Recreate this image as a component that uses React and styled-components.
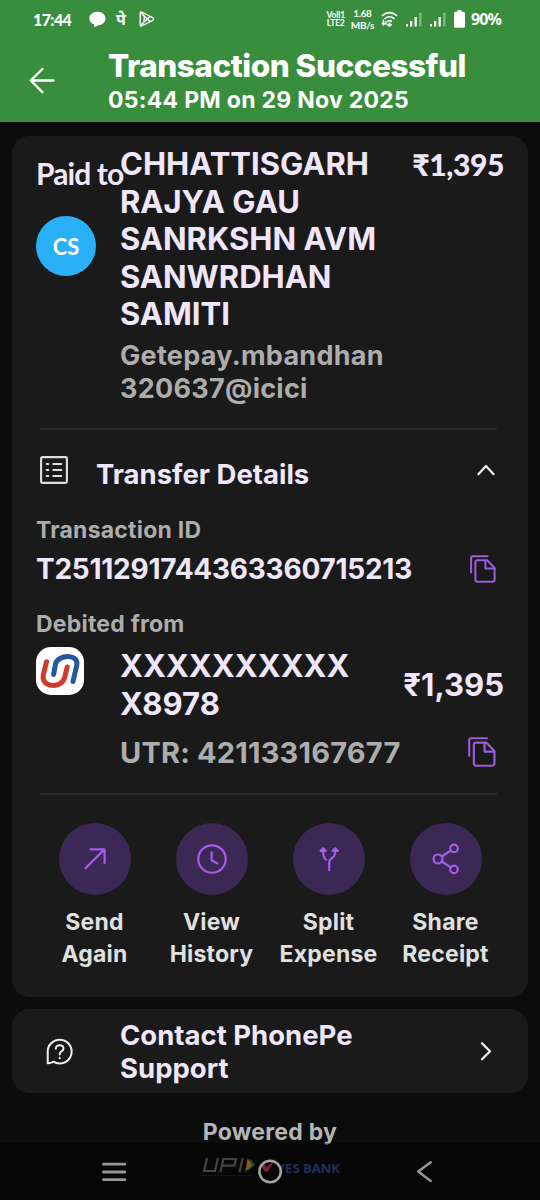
import React from 'react';
import styled, { createGlobalStyle } from 'styled-components';

const actions = [
  { name: 'send', text: ['Send', 'Again'] },
  { name: 'history', text: ['View', 'History'] },
  { name: 'split', text: ['Split', 'Expense'] },
  { name: 'share', text: ['Share', 'Receipt'] },
];

const ActionIcon = ({ name }) => (
  <Icon width="36" height="36" viewBox="0 0 36 36" $width={2.2}>
    {name === 'send' && <path d="M8.5 27.3 27.4 8.4M13.5 8.4H27.6V22" />}
    {name === 'history' && (
      <>
        <circle cx="18" cy="18" r="13.7" />
        <path d="M17.6 11.3V18.3Q17.7 19.4 18.6 20L23.6 22.6" />
      </>
    )}
    {name === 'split' && (
      <>
        <path d="M18.2 29.2V21.5Q18.2 19.2 20.4 17.7 24.2 15 24.2 11V8.5M12.2 8.5V11.5Q12.2 16.5 15.2 18.7" />
        <path d="M9.6 9.8 12.2 7.2 14.8 9.8ZM21.6 9.8 24.2 7.2 26.8 9.8Z" />
      </>
    )}
    {name === 'share' && (
      <>
        <circle cx="10" cy="18" r="4.5" />
        <circle cx="26" cy="7.4" r="3.8" />
        <circle cx="26" cy="28.4" r="3.8" />
        <path d="M13.8 15.5 22.8 9.5M13.8 20.5 22.8 26.3" />
      </>
    )}
  </Icon>
);

const CopyIcon = ({ width = 26, height = 28 }) => (
  <Icon width={width} height={height} viewBox="0.4 0 26 28" $color="#9c5cdc" $width={2}>
    <path d="M1.5 17.5V3Q1.5 1.2 3.3 1.2H18" />
    <path d="M8 5.3H17.5L25 13V24.6Q25 26.8 22.8 26.8H8Q5.8 26.8 5.8 24.6V7.5Q5.8 5.3 8 5.3Z" />
    <path d="M15.8 5.5V13.6H24.8" />
  </Icon>
);

const SignalIcon = () => (
  <svg width="16" height="15" viewBox="0 0 16 15" fill="#fff">
    <path d="M0 12h2v2.5H0zM4 9h2.3v5.5H4zM8.5 5h2.3v9.5H8.5z" />
    <path d="M13.2 1h2.3v13.5h-2.3z" opacity="0.4" />
  </svg>
);

const App = () => {
  return (
    <>
      <GlobalStyle />
      <Screen>
        <Header>
          <StatusBar>
            <Clock>17:44</Clock>
            <svg width="17" height="17" viewBox="0 0 17 17" fill="#fff">
              <path d="M8.5.8C13 .8 16.5 3.6 16.5 7.5S13 14.2 9.5 14.2Q7 16 4.8 16 5.6 14.7 5 13.5C2.2 12.6.4 10.4.4 7.5.4 3.6 4 .8 8.5.8Z" />
            </svg>
            <PeMark>पे</PeMark>
            <Icon width="16" height="16" viewBox="0 0 16 16" $color="#fff" $width={1.4}>
              <path d="M2.6 1Q1.2.5 1.2 2.2V13.8Q1.2 15.5 2.6 15L13.7 9.3Q15.6 8 13.7 6.7ZM1.8 1.7 11 10.5M1.8 14.3 11 5.5M5.2 5 5.2 11" />
            </Icon>
            <StatusRight>
              <Stack>
                <span>Voll1</span>
                <span>LTE2</span>
              </Stack>
              <Stack $large>
                <span>1.68</span>
                <span>MB/s</span>
              </Stack>
              <WifiIcon width="17" height="16" viewBox="0 0 18 16">
                <path d="M1 4.6Q9-2 17 4.6M3.6 7.8Q9 3.5 14.4 7.8M6.5 10.8Q9 8.8 11.5 10.8" />
                <path d="M9 12.6l1.6 1.6L9 15.6l-1.6-1.4ZM2.6 8.6v5M1 12.2l1.6 1.8 1.4-1.8M5.3 14V10.5" />
              </WifiIcon>
              <SignalIcon />
              <SignalIcon />
              <svg width="11" height="18" viewBox="0 0 11 18" fill="#fff">
                <path d="M3.4 0H7.6V1.8H9.4Q11 1.8 11 3.4V16.2Q11 17.8 9.4 17.8H1.6Q0 17.8 0 16.2V3.4Q0 1.8 1.6 1.8H3.4Z" />
              </svg>
              <Percent>90%</Percent>
            </StatusRight>
          </StatusBar>
          <TitleRow>
            <Icon width="26" height="28" viewBox="0 0 26 28" $color="#fff" $width={2.4}>
              <path d="M24.4 13.5H1.8M13.4 2 1.8 13.5 13.4 25.2" />
            </Icon>
            <div>
              <Title>Transaction Successful</Title>
              <DateText>05:44 PM on 29 Nov 2025</DateText>
            </div>
          </TitleRow>
        </Header>

        <DetailsCard>
          <PayeeRow>
            <PayeeSide>
              <PaidTo>Paid to</PaidTo>
              <Avatar>
                <span>CS</span>
              </Avatar>
            </PayeeSide>
            <div>
              <PayeeName>
                CHHATTISGARH
                <br />
                RAJYA GAU
                <br />
                SANRKSHN AVM
                <br />
                SANWRDHAN
                <br />
                SAMITI
              </PayeeName>
              <PayeeId>
                Getepay.mbandhan
                <br />
                320637@icici
              </PayeeId>
            </div>
            <PaidAmount>₹1,395</PaidAmount>
          </PayeeRow>
          <Divider />

          <SectionHead>
            <Icon width="28" height="28" viewBox="0 0 28 28" $color="#dedede" $width={2.1}>
              <rect x="1.1" y="1.1" width="25.8" height="25.8" rx="1.4" />
              <path d="M6.7 8h1.6M6.7 14h1.6M6.7 20h1.6M13.3 8h8M13.3 14h8M13.3 20h8" />
            </Icon>
            <SectionTitle>Transfer Details</SectionTitle>
            <Icon width="20" height="12" viewBox="0 0 20 12" $color="#eee" $width={2.2}>
              <path d="M2.4 10.2 10 2 17.6 10.2" />
            </Icon>
          </SectionHead>

          <FieldLabel $top={5}>Transaction ID</FieldLabel>
          <CopyRow $top={6}>
            <TransactionId>T2511291744363360715213</TransactionId>
            <CopyIcon />
          </CopyRow>

          <FieldLabel $top={22}>Debited from</FieldLabel>
          <DebitRow>
            <BankLogo>
              <svg width="48" height="48" viewBox="0 0 48 48" fill="none" strokeLinecap="round" strokeWidth="5">
                <path d="M17.6 27.5 19.5 17C21.5 7.5 43 6 40.8 18L37 34.5" stroke="#24589f" />
                <path d="M10.5 14.7 7.3 28C4.5 41 26.5 42 28.8 30L31.2 20" stroke="#cf3a31" />
              </svg>
            </BankLogo>
            <Account>
              XXXXXXXXXX
              <br />
              X8978
            </Account>
            <DebitAmount>₹1,395</DebitAmount>
          </DebitRow>
          <CopyRow $top={12} $indent={84}>
            <Utr>UTR: 421133167677</Utr>
            <CopyIcon width={28} height={30} />
          </CopyRow>
          <Divider $top={23} />

          <ActionList>
            {actions.map((a) => (
              <ActionItem key={a.name}>
                <ActionCircle>
                  <ActionIcon name={a.name} />
                </ActionCircle>
                <ActionLabel>
                  {a.text[0]}
                  <br />
                  {a.text[1]}
                </ActionLabel>
              </ActionItem>
            ))}
          </ActionList>
        </DetailsCard>

        <SupportCard>
          <Icon width="27" height="27" viewBox="0 0 28 28" $color="#eee" $width={2.1}>
            <path d="M1.8 26.2V14.3A12.4 12.4 0 1 1 14.2 26.5Q10.5 26.5 7.5 24.6Q5 26.3 1.8 26.2Z" />
            <path d="M10.2 11.1Q10.2 7.6 14.2 7.6 18.1 7.6 18.1 11 18.1 13 15.7 14.2 14.2 15 14.2 17M14.2 20.5v.5" />
          </Icon>
          <SupportText>
            Contact PhonePe
            <br />
            Support
          </SupportText>
          <Icon width="12" height="20" viewBox="0 0 12 20" $color="#eee" $width={2.3}>
            <path d="M2 2.3 10 10.3 2 18.3" />
          </Icon>
        </SupportCard>

        <PoweredBy>Powered by</PoweredBy>
        <Partners>
          <svg width="56" height="22" viewBox="0 0 56 22" fill="none">
            <path
              d="M5 1 2.2 14H13L16 1M18.5 15 21.4 2H34L32.4 8.7H20.2M37.5 15 40.8 1"
              stroke="#6a6a6d"
              strokeWidth="2.2"
            />
            <path d="M48 1 53 8 46 14Z" fill="#1c8048" />
            <path d="M45.6 1 50 8 43.3 15Z" fill="#d98628" />
            <path d="M0 18.5H50" stroke="#2b2b2b" strokeWidth="1.2" strokeDasharray="2 1" />
          </svg>
          <svg width="19" height="18" viewBox="0 0 19 18">
            <path d="M2.5 8.5 6.5 7.5 8.5 10.5 17.5 1.5 9.8 14.5H6.8Z" fill="#c92f4b" />
          </svg>
          <YesBank>YES BANK</YesBank>
        </Partners>

        <NavBar>
          <Icon width="26" height="22" viewBox="0 0 26 22" $color="#969696" $width={2.8}>
            <path d="M2.4 3.2H23.8M2.4 11H23.8M2.4 18.7H23.8" />
          </Icon>
          <Icon width="26" height="26" viewBox="0.9 0.5 26 26" $color="#a3a3a3" $width={2.5}>
            <circle cx="13" cy="13" r="10.7" />
          </Icon>
          <Icon width="18" height="24" viewBox="0 0 18 24" $color="#969696" $width={2.5}>
            <path d="M15.7 2.2 3.2 11.6 15.7 21" />
          </Icon>
        </NavBar>
      </Screen>
    </>
  );
};

export default App;

const GlobalStyle = createGlobalStyle`
  * {
    box-sizing: border-box;
  }
  body {
    margin: 0;
    background: #0c0c0c;
    font-family: Inter, 'Liberation Sans', sans-serif;
  }
`;

const Screen = styled.div`
  position: relative;
  width: 540px;
  height: 1200px;
  overflow: hidden;
  background: #0c0c0c;
  color: #f0e6fa;
  white-space: nowrap;
  font-weight: 700;
`;

const Icon = styled.svg`
  flex: none;
  fill: none;
  stroke: ${({ $color }) => $color || '#a35de8'};
  stroke-width: ${({ $width }) => $width};
  stroke-linecap: round;
  stroke-linejoin: round;
`;

const Header = styled.header`
  height: 122px;
  background: #388e3c;
  color: #fff;
`;

const StatusBar = styled.div`
  display: flex;
  align-items: center;
  height: 38px;
  padding: 0 39px 0 33px;
`;

const Clock = styled.span`
  width: 56px;
  font: 900 16px Lato, sans-serif;
  letter-spacing: -0.6px;
`;

const PeMark = styled.span`
  width: 12px;
  margin: 0 11px 0 10px;
  font: 700 16px 'Noto Sans', 'Noto Sans Devanagari', sans-serif;
`;

const StatusRight = styled.div`
  display: flex;
  align-items: center;
  gap: 8px;
  margin-left: auto;
`;

const Stack = styled.div`
  display: flex;
  flex-direction: column;
  align-items: center;
  margin-left: ${({ $large }) => ($large ? -2 : 0)}px;
  font: 700 ${({ $large }) => ($large ? '10px/12px' : '8.5px/8px')} Lato, sans-serif;
  letter-spacing: ${({ $large }) => ($large ? -0.4 : -0.2)}px;
`;

const WifiIcon = styled.svg`
  margin-left: -1px;
  fill: none;
  stroke: #fff;
  stroke-width: 1.7;
`;

const Percent = styled.span`
  margin-left: -2px;
  font: 700 16px 'Noto Sans', sans-serif;
  letter-spacing: -0.9px;
`;

const TitleRow = styled.div`
  display: flex;
  align-items: center;
  gap: 53px;
  padding: 9px 0 0 29px;
`;

const Title = styled.h1`
  margin: 0;
  font-size: 31.5px;
  line-height: 38px;
  font-weight: 800;
  letter-spacing: -0.48px;
`;

const DateText = styled.div`
  font-size: 23px;
  line-height: 30px;
  letter-spacing: 0.28px;
`;

const DetailsCard = styled.section`
  height: 861px;
  margin: 14px 12px 0;
  padding: 0 24px;
  border-radius: 18px;
  background: #1a1a1a;
`;

const PayeeRow = styled.div`
  display: flex;
  align-items: flex-start;
  height: 292px;
  padding-top: 9px;
`;

const PayeeSide = styled.div`
  width: 84px;
  flex: none;
`;

const PaidTo = styled.div`
  margin-top: 8px;
  font: 700 30px/40px Lato, sans-serif;
  letter-spacing: -0.9px;
`;

const Avatar = styled.div`
  display: flex;
  align-items: center;
  justify-content: center;
  width: 60px;
  height: 60px;
  margin-top: 23px;
  border-radius: 50%;
  background: #29b0f6;
  color: #fff;
  font: 700 22px Lato, sans-serif;
`;

const PayeeName = styled.div`
  font-size: 31px;
  line-height: 37.5px;
`;

const PayeeId = styled.div`
  margin-top: 6px;
  color: #adadad;
  font-size: 27px;
  line-height: 33px;
  letter-spacing: 0.27px;
`;

const PaidAmount = styled.div`
  margin: 0 0 0 auto;
  font: 900 30px/38px Lato, sans-serif;
  letter-spacing: -0.4px;
`;

const Divider = styled.div`
  height: 2px;
  margin: ${({ $top }) => $top || 0}px 7px 0 4px;
  background: #2b2b2b;
`;

const SectionHead = styled.div`
  display: flex;
  align-items: center;
  height: 80px;
  padding: 0 8px 0 4px;
`;

const SectionTitle = styled.h2`
  flex: 1;
  margin: 8px 0 0 28px;
  font-size: 27.5px;
  line-height: 36px;
`;

const FieldLabel = styled.div`
  margin-top: ${({ $top }) => $top}px;
  color: #adadad;
  font-size: 23px;
  line-height: 30px;
  letter-spacing: 0.22px;
`;

const CopyRow = styled.div`
  display: flex;
  align-items: center;
  justify-content: space-between;
  height: 36px;
  margin-top: ${({ $top }) => $top}px;
  padding: 0 8px 0 ${({ $indent }) => $indent || 0}px;
`;

const TransactionId = styled.div`
  font-size: 28px;
  letter-spacing: -0.25px;
`;

const DebitRow = styled.div`
  display: flex;
  height: 75px;
  margin-top: 8px;
`;

const BankLogo = styled.div`
  width: 48px;
  height: 48px;
  margin-right: 36px;
  border-radius: 15px;
  background: #fff;
`;

const Account = styled.div`
  font-size: 31px;
  line-height: 37.5px;
  letter-spacing: 0.06px;
`;

const DebitAmount = styled.div`
  align-self: center;
  margin-left: auto;
  font-size: 31px;
`;

const Utr = styled.div`
  color: #adadad;
  font-size: 29px;
  letter-spacing: 0.18px;
`;

const ActionList = styled.div`
  display: grid;
  grid-template-columns: repeat(4, 117px);
  margin-top: 28.4px;
`;

const ActionItem = styled.div`
  display: flex;
  flex-direction: column;
  align-items: center;
`;

const ActionCircle = styled.div`
  display: flex;
  align-items: center;
  justify-content: center;
  width: 72px;
  height: 72px;
  border-radius: 50%;
  background: #3b2854;
`;

const ActionLabel = styled.div`
  margin-top: 12px;
  color: #e0e0e0;
  font-size: 23px;
  line-height: 31.5px;
  letter-spacing: 0.22px;
  text-align: center;
`;

const SupportCard = styled.section`
  display: flex;
  align-items: center;
  height: 84px;
  margin: 12.4px 12px 0;
  padding: 0 36px 0 34px;
  border-radius: 18px;
  background: #1a1a1a;
`;

const SupportText = styled.div`
  flex: 1;
  margin: 1px 0 0 47px;
  font-size: 27.5px;
  line-height: 33px;
`;

const PoweredBy = styled.div`
  margin-top: 24px;
  color: #b5b5b5;
  font-size: 23px;
  line-height: 30px;
  letter-spacing: 0.25px;
  text-align: center;
`;

const Partners = styled.div`
  display: flex;
  align-items: flex-start;
  margin: 10px 0 0 202px;
`;

const YesBank = styled.span`
  margin-top: 3px;
  color: #33478f;
  font: 700 13px/16px 'Open Sans', sans-serif;
`;

/* translucent system bar drawn over the end of the page */
const NavBar = styled.nav`
  position: absolute;
  left: 0;
  right: 0;
  bottom: 0;
  display: flex;
  align-items: center;
  justify-content: space-between;
  height: 57px;
  padding: 0 107px 0 101px;
  background: rgba(0, 0, 0, 0.35);
`;
